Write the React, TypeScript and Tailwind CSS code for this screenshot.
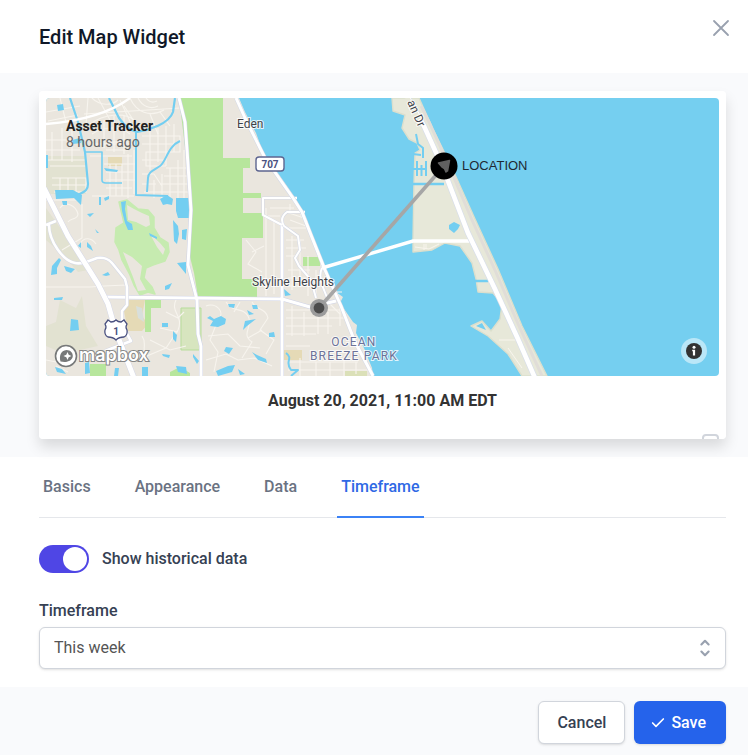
import React, { useState } from 'react';
import { Check } from 'lucide-react';

const tabs = ['Basics', 'Appearance', 'Data', 'Timeframe'];

const Streets = () => (
    <g fill="none" stroke="#f7f4ee" strokeWidth="1.1">
        {/* north west neighbourhood */}
        <path d="M46 112l34-6M48 121l30-6M60 98l6 24M88 98l-2 26M98 98l12 22M46 140h38M52 132v28M62 128v32M72 126v36M46 150h34M46 160h40"/>
        <path d="M84 114l96-6M90 124c14-10 34-12 44-4M92 134c12-8 28-8 38 0M92 144h40M92 98c8 8 20 8 26 2M120 100l14 30M104 120v28M114 116v36M124 116v38"/>
        <path d="M130 98c6 14 20 20 34 12M138 98c4 8 12 12 20 8M146 98c3 4 7 5 11 3M124 106l16 24M160 112l10 14M150 114l8 20"/>
        <path d="M142 136h38v16h-34v14h20M142 144h34M150 128v42M158 128v34M166 126v40M174 124v28M142 174h12l8 12M142 184h14M178 160v38M184 150v50M170 168v30M162 174v26M154 180v18"/>
        <path d="M144 192h44M160 184h28M164 176h24M166 168h22M142 160h22M128 142h-22M128 150h-22"/>
        <path d="M90 156h42M104 164h32M106 172h28M110 164v32M116 164v32M122 164v32M128 154v44M134 150v44M106 180h30M106 188h26"/>
        <path d="M52 178h34v14H54M52 185h34M60 178v14M68 178v14M76 178v14M50 166h36M46 200h34M92 196h42"/>
        <path d="M82 204v34l-20 12"/>
        {/* inland lots */}
        <path d="M60 208c6-8 16-2 18 6 0 6-8 4-10 8M80 244c4-8 12-6 16 0M46 287h44l14-1M104 286l22-1v10"/>
        <path d="M176 300c-6 12 8 16 2 30l-12 18-24 10M166 312l12 6 6-6M160 328l18 4M150 340l20 10 16-4M142 336c6 8-2 14 6 22M46 360l20 4 10-8M56 366l12 6"/>
        <path d="M206 306c10-4 20 6 12 14l-8 20 8 12-4 20M226 302c8 12 16 4 22 14s-8 18 4 26l-10 16M252 302c4 8 14 6 16 16l-8 12 14 10-8 14M208 336l20-2 12 12 20 2M206 360l20-6 12 6 16-2 18 8M240 302l-6 10M262 330l-14 8"/>
        {/* along the river */}
        <path d="M266 208v88M274 222v72M246 240l10 12-8 12 14 8M252 252l12-6M286 240h18M286 248h20M286 256h12M288 270h22M288 278h24M288 286h20M292 236v54M300 240v44M308 256v40M316 270v26"/>
        <path d="M270 208h24M268 216h12M286 212l18 6M290 220l16 6M286 228h20M290 204v10M298 206l4 12"/>
        <path d="M286 310h56M286 318h60M286 326h46M286 334h30M286 346h24M288 362h70M288 370h80M292 306v30M304 312v24M318 316v18M328 312v22M340 306v20M300 358v18M316 362v14M330 362v14M344 360v16M356 362v12"/>
        <path d="M330 292h12M326 300l14 14M334 284l4 12"/>
    </g>
);

const Canals = () => (
    <g fill="none" stroke="#73cef1" strokeWidth="2.2" strokeLinejoin="round">
        <path d="M70 98l8 24 7 30 3 32c0 8-6 8-12 12"/>
        <path d="M86 152h16v28q0 3 4 3h16" strokeWidth="1.6"/>
        <path d="M109 98l10 20c6 8 10 12 18 14 12-2 32-8 36-20l2-14"/>
        <path d="M136 132v63l32 1" strokeWidth="2"/>
        <path d="M147 192l1-14c0-6 6-8 12-12s8-20 20-25" strokeWidth="2"/>
        <g fill="#73cef1" stroke="none">
            <path d="M57 105l6-1 1 6-6 1zM72 140l8-2 1 5-8 1zM46 155h2v13h-2zM55 190h18l9 5-1 10-7-7-18 1zM62 201l5 0v4h-4zM104 168l14 2-1 2-11-1z"/>
            <path d="M176 198h13v20h-11l-2-7zM160 199l7-4 6 4-1 6-5-1-4 1zM99 197h2v8h-2zM104 198l5-2v3l-4 2zM87 214l7-1-4 4zM95 229l4 4-2 0z"/>
            <path d="M173 220l5 6 1 8-2 10-3-3zM182 230l5-1-1 11-4-1zM59 258l2 2-4 8 0 6-6 1 1-9zM64 266l11 3-4 4-5-2zM87 242l4 4 2 5-6-4zM81 242v6l-3-2zM102 275l6-3 2 3-4 1zM165 286l7-3-3 6-4 1zM177 263l9-1v12z"/>
            <path d="M54 298l9-1-1 3-8 0zM71 319l7 1 1 10-9 1zM162 323h6v4h-6zM173 331l4 4-1 7-3-3zM162 354l8 1-1 3-6-2zM193 354l6 7-2 3-4-7zM85 363l4-1 1 11-5 1zM115 368l4 0-1 8h-4zM142 367h6v9h-6zM176 366l10 1 1 7-9-2zM55 367l7 2 4 5-9-2z"/>
            <path d="M210 316l4 3 7-3 5 3-1 5-7 3-8-1 3-5-6-3zM228 304l7 0-1 4-5-1zM252 305l5 0 1 4-5 0zM247 310l7 4-5 1zM245 321l11-2-9 7-4 4zM269 333l5-1 1 5-6 0zM226 347l7 1-4 6-5-3zM216 371l12-5 7-1-3 7-14 4zM252 352l5 3 9 4 1 4-9-3zM238 369l7 5-5 1zM284 289l7 6-6 1z"/>
        </g>
        <path d="M286 353c8 6-2 8 5 17l7 0-7 6" strokeWidth="2"/>
    </g>
);

const GolfCourse = () => (
    <g>
        <path
            d="M119 202L127 200 138 209 148 210 154 217 154 228 160 238 168 243 169 252 165 261 153 265 146 268 144 278 152 287 155 294 148 292 140 295 134 285 130 275 122 260 119 250 115 242 116 228 124 223z"
            fill="#c6ebb0" stroke="#c6ebb0" strokeWidth="1.5" strokeLinejoin="round"/>
        <path
            d="M127 205L134 209 142 213 149 216 150 225 146 227 136 222 128 220zM123 252L132 257 142 266 140 279 146 290 138 291 133 277zM150 234L160 243 165 249 163 255 157 247z"
            fill="#eae6de"/>
        <path d="M121 202l5-1-1 8 2 12 5 3 1 6-5 0-3-7-3-12zM149 233l8 4v2l-7-3z" fill="#73cef1"/>
    </g>
);

const Island = () => (
    <g>
        <path
            d="M392 98L393 111 405 115 402 128 409 139 417 143 420 150 415 153 414 183 413 239 413 252 432 250 445 243 460 246 472 263 476 279 478 292 493 293 502 304 500 319 491 331 482 321 471 326 488 336 508 354 522 376H547L522 326 498 269 475 219 452 168 433 129 419 98z"
            fill="#e7e8d9" stroke="#dcdfcd" strokeWidth="1.4" strokeLinejoin="round"/>
        <path d="M476 326l6-3 4 7z" fill="#73cef1"/>
        <path d="M449 225l5-3 6 3-2 4-4 4-5-4z" fill="#73cef1"/>
        <path d="M413 184h31M474 281h14" stroke="#73cef1" strokeWidth="2.6"/>
        <path d="M416 134l2 10 5 4v10M413 154l8 1M417 161v15M421.500 165v11M426 161v15M413 169h13" stroke="#73cef1" strokeWidth="2" fill="none"/>
        <path d="M415 247l14 2 10-5M424 244v6M426 244v5M499 340h18M508 348l14 20" stroke="#f8f5ed" fill="none"/>
        <path d="M421 106l8 16 20 44 23 54 23 50 24 56 23 50" fill="none" stroke="#e0ddd8" strokeWidth="3"/>
        <path d="M322 268l91-27h57" fill="none" stroke="#fff" strokeWidth="3.4"/>
        <path d="M408 98L424 126 443 168 468 233 495 289 518 339 535 378" fill="none" stroke="#d8deea" strokeWidth="6"/>
        <path d="M408 98L424 126 443 168 468 233 495 289 518 339 535 378" fill="none" stroke="#fff" strokeWidth="4.600"/>
        <path d="M406 98l12 22" stroke="#e7e8d9" strokeWidth="7"/>
    </g>
);

const MapView = () => (
    <svg
        viewBox="46 98 673 278"
        preserveAspectRatio="xMidYMid slice"
        className="block h-full w-full font-['Roboto',sans-serif]"
        role="img"
        aria-label="Map of the tracked asset"
    >
        <rect x="46" y="98" width="673" height="278" fill="#75cff0"/>
        {/* mainland */}
        <path
            d="M46 98h193l6 14 11 21 8 22 15 20 18 26 10 19 4 15 14 35 8 20 10 7-3 6 13 19 4 3-1 8 8 15 8 20 1 8H46z"
            fill="#eae6de"/>
        <path d="M46 156h40v38H46zM46 208l20 28 22 34-10 2-16-18-16-14zM60 300l16 8 6-12 4 30 12 20-18 4-20 2-14-6v-20l10-4z" fill="#e2e2d1"/>
        <path d="M108 157h14v9h-14zM127 300h18l-3 16 6 8-6 7h-14l-4-20zM284 350h18v10h-18z" fill="#e5dab6"/>
        <path d="M136 306l6 2 2 14-6-4z" fill="#d8dfdc"/>
        <path
            d="M179 98h44v60h27v10h-7v25h18v5h-18v15h20v25h-21v41h15v18h-59l-4-24-5-20 3-30-4-50-3-26z"
            fill="#b7e69c"/>
        <path d="M145 300h16v8h-10v24h-6zM90 364h16v12H90zM303 257h17v9h-17zM170 372l10-5 10 6v3h-20z" fill="#b7e69c"/>
        <path d="M345 371h22v5h-22z" fill="#dbe0b8"/>
        <path d="M181 308h20v42h-20z" fill="#d7e5bf" stroke="#b7dd9b"/>
        <Streets/>
        <GolfCourse/>
        <Canals/>
        <g fill="none" stroke="#cfd3e6" strokeWidth="4" strokeLinejoin="round">
            <path d="M179 98l6 24 2 28 4 60-3 55 9 35 1 34 3 12v30M282 222v154M106 297l176 2 28 8 26-6"/>
        </g>
        <g fill="none" stroke="#fff" strokeWidth="3" strokeLinejoin="round">
            <path d="M46 124c24-2 60-8 84-26" strokeWidth="2.4"/>
            <path d="M179 98l6 24 2 28 4 60-3 55 9 35 1 34 3 12v30"/>
            <path d="M282 222v154M106 297l176 2 28 8 26-6"/>
            <path d="M297 198h-34v17l19 10M305 212h-18q-8 6-3 14l14 10 2 14-5 8 4 8 12 14 5 18M322 268q-4 8 2 22l4 10" stroke="#d5d9e6"/>
            <path d="M297 198h-34v17l19 10M305 212h-18q-8 6-3 14l14 10 2 14-5 8 4 8 12 14 5 18M322 268q-4 8 2 22l4 10" strokeWidth="2"/>
            <path d="M49 225c0 16 14 36 26 38 8 2 16-3 22-5 6-1 12 1 15 5l13 16 2 8v18l-5 6v14l9 16-26 10M46 225l10-4" stroke="#d5d9e6" strokeWidth="3.600"/>
            <path d="M49 225c0 16 14 36 26 38 8 2 16-3 22-5 6-1 12 1 15 5l13 16 2 8v18l-5 6v14l9 16-26 10M46 225l10-4" strokeWidth="2.6"/>
            <path d="M236 98l9 20 20 40 28 40 9 14 9 23 14 35 16 36 14 36 18 34" stroke="#d5d9e6" strokeWidth="4"/>
            <path d="M236 98l9 20 20 40 28 40 9 14 9 23 14 35 16 36 14 36 18 34"/>
        </g>
        <path d="M44 188l24 48 30 48 10 20 8 28 18 46" fill="none" stroke="#d5d8e8" strokeWidth="6"/>
        <path d="M44 188l24 48 30 48 10 20 8 28 18 46" fill="none" stroke="#fff" strokeWidth="5"/>
        <Island/>

        <g fill="#3f4248" stroke="#fff" strokeWidth="2" strokeOpacity="0.8" paintOrder="stroke" fontSize="12">
            <text x="237" y="128">Eden</text>
            <text x="252" y="286">Skyline Heights</text>
            <text x="407" y="102" transform="rotate(66 407 102)">an Dr</text>
            <g fill="#6c7299" letterSpacing="1.2">
                <text x="354" y="346" textAnchor="middle">OCEAN</text>
                <text x="354" y="360" textAnchor="middle">BREEZE PARK</text>
            </g>
        </g>

        {/* road shields */}
        <rect x="256" y="157" width="28" height="14" rx="3" fill="#fff" stroke="#5d6590" strokeWidth="1.4"/>
        <text x="270" y="168" textAnchor="middle" fontSize="10" fontWeight="700" fill="#4a5180">707</text>
        <path
            d="M108 320l3 2q3 0 5-2 2 2 5 2l3-2 3 4q-2 3 0 6 1 5-3 7-5 0-8 3-3-3-8-3-4-2-3-7 2-3 0-6z"
            fill="#fff" stroke="#4a5180" strokeWidth="1.3"/>
        <text x="116" y="335" textAnchor="middle" fontSize="10" fontWeight="700" fill="#4a5180">1</text>

        {/* travelled path */}
        <path d="M319 308L444 166" stroke="#a6a6a6" strokeWidth="3.6"/>
        <circle cx="319" cy="308" r="9" fill="#9b9b9b"/>
        <circle cx="319" cy="308" r="5.4" fill="#4b4b4b"/>
        <circle cx="444" cy="166" r="13.5" fill="#000"/>
        <path d="M449.500 160.500l-11 2.500 3.500 4q3 1 4 5l1.500-1z" fill="#606060" stroke="#606060" strokeWidth="1.5" strokeLinejoin="round"/>
        <text x="462" y="170" fontSize="13" fill="#1f2933" className="font-['Liberation_Sans',sans-serif]">LOCATION</text>

        {/* map provider logo */}
        <circle cx="66" cy="356" r="10.5" fill="#fff" stroke="#77797a" strokeWidth="1.6"/>
        <path d="M60.500 361.500c-1.500-5 0-11 6-11.500 4 0 6.500 3 6.300 6-.4 5-6 7-12.300 5.500z" fill="#77797a"/>
        <path d="M67.500 352l1.200 2.800 2.800 1.200-2.800 1.200-1.200 2.800-1.200-2.800-2.800-1.200 2.800-1.200z" fill="#fff"/>
        <text x="79" y="361" fontSize="18" fontWeight="600" fill="#fff" stroke="#858686" strokeWidth="2" paintOrder="stroke" className="font-['Inter',sans-serif]">mapbox</text>
    </svg>
);

const PreviewCard = () => (
    <div className="relative h-[348px] overflow-hidden rounded bg-white p-[7px]">
        <div className="relative h-[278px] overflow-hidden rounded">
            <MapView/>
            <div className="absolute left-5 top-5 text-sm leading-4">
                <p className="font-bold text-[#222]">Asset Tracker</p>
                <p className="text-[#666]">8 hours ago</p>
            </div>
            <button
                aria-label="Map information"
                className="absolute bottom-3 right-3 flex size-[26px] items-center justify-center rounded-full bg-white/50"
            >
                <svg viewBox="0 0 16 16" className="size-4">
                    <circle cx="8" cy="8" r="8" fill="#333"/>
                    <circle cx="8" cy="4.2" r="1.5" fill="#fff"/>
                    <path d="M6.200 6.800h2.900v5.800H6.900V8.200h-.7z" fill="#fff"/>
                </svg>
            </button>
        </div>
        <p className="mt-[13px] text-center text-base font-bold text-[#333]">August 20, 2021, 11:00 AM EDT</p>
        <span className="absolute -bottom-3 right-[7px] h-[17px] w-[17px] rounded border-2 border-gray-300"/>
    </div>
);

const App = () => {
    const [active, setActive] = useState('Timeframe');

    return (
        <div className="w-full bg-white font-['Roboto',sans-serif]">
            <header className="flex h-[73px] items-start justify-between pl-[39px] pr-[15px] pt-4">
                <h1 className="pt-[7px] text-xl leading-7 font-medium text-gray-900">Edit Map Widget</h1>
                <button aria-label="Close" className="text-gray-400">
                    <svg viewBox="0 0 24 24" className="size-6" fill="none" stroke="currentColor" strokeWidth="1.8" strokeLinecap="round">
                        <path d="M5 5l14 14M19 5L5 19"/>
                    </svg>
                </button>
            </header>

            <section className="bg-[#f9fafc] pb-[18px] pl-[39px] pr-[22px] pt-[18px]">
                <div className="rounded shadow-[0_8px_14px_rgba(0,0,0,0.13)]">
                    <PreviewCard/>
                </div>
            </section>

            <main className="pb-[18px] pl-[39px] pr-[22px]">
                <nav className="flex gap-9 border-b border-gray-200">
                    {tabs.map((tab) => (
                        <button
                            key={tab}
                            onClick={() => setActive(tab)}
                            className={
                                tab === active
                                    ? "-mb-px border-b-2 border-[#3b82f6] px-1 pb-[17px] pt-[18px] font-medium text-[#2f69e5]"
                                    : "-mb-px border-b-2 border-transparent px-1 pb-[17px] pt-[18px] font-medium text-gray-500"
                            }
                        >
                            {tab}
                        </button>
                    ))}
                </nav>

                <div className="mt-[27px] flex h-7 items-center">
                    <input
                        id="history"
                        type="checkbox"
                        role="switch"
                        defaultChecked
                        className="flex h-7 w-[50px] appearance-none items-center rounded-full bg-gray-300 px-[2px] before:size-[24px] before:rounded-full before:bg-white checked:justify-end checked:bg-[#4f46e5]"
                    />
                    <label htmlFor="history" className="ml-[13px] font-medium text-gray-700">Show historical data</label>
                </div>

                <label htmlFor="timeframe" className="mt-[26px] block font-medium text-gray-700">Timeframe</label>
                <div className="relative mt-1">
                    <select
                        id="timeframe"
                        className="block h-[42px] w-full appearance-none rounded-md border border-gray-300 bg-white px-[14px] text-base text-[#555] shadow-sm"
                    >
                        <option>This week</option>
                    </select>
                    <svg
                        viewBox="0 0 20 20"
                        className="pointer-events-none absolute inset-y-0 right-[9px] my-auto size-6 text-gray-400"
                        fill="none"
                        stroke="currentColor"
                        strokeWidth="1.8"
                        strokeLinecap="round"
                        strokeLinejoin="round"
                    >
                        <path d="M7 7l3-3 3 3m0 6l-3 3-3-3"/>
                    </svg>
                </div>
            </main>

            <footer className="flex justify-end gap-[9px] bg-[#f9fafc] pb-[11px] pr-[22px] pt-[14px]">
                <button className="h-[43px] rounded-md border border-gray-300 bg-white px-[18px] font-medium text-gray-700 shadow-sm">
                    Cancel
                </button>
                <button className="flex h-[43px] items-center rounded-md bg-[#2563eb] pl-4 pr-5 font-medium text-white shadow-sm">
                    <Check className="mr-[5px] size-4" strokeWidth={2.5}/>
                    Save
                </button>
            </footer>
        </div>
    );
};

export default App;
